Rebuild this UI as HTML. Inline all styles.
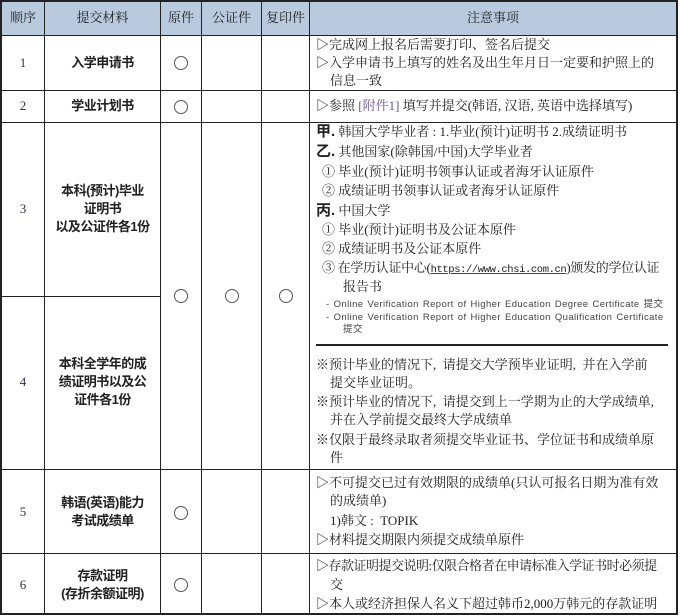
<!DOCTYPE html>
<html><head><meta charset="utf-8"><style>
body{margin:0;width:680px;height:616px;background:#fff;overflow:hidden;position:relative;font-family:"Liberation Serif","Noto Serif CJK SC",serif;color:#222}
.l{position:absolute;background:#222}
.t{position:absolute;white-space:nowrap;font-size:13px;line-height:18px;height:18px}
.c{position:absolute;text-align:center;font-size:13px;line-height:18px}
.b{font-family:"Liberation Sans","Noto Sans CJK SC",sans-serif;font-weight:bold;letter-spacing:-0.5px}
.n{color:#334}
.o{position:absolute;width:12px;height:12px;border:1px solid #555;border-radius:50%}
.s{font-size:9.5px;color:#444;font-family:"Liberation Sans","Noto Sans CJK SC",sans-serif;letter-spacing:0.4px;word-spacing:1px}
.k{font-family:'Liberation Sans','Noto Sans CJK SC',sans-serif;font-size:15px}
</style></head><body>
<div style="position:absolute;left:1px;top:1px;width:676px;height:34px;background:#b9cadf"></div>
<div class="l" style="left:0;top:0;width:2px;height:615px"></div>
<div class="l" style="left:44px;top:0;width:1px;height:615px"></div>
<div class="l" style="left:160px;top:0;width:1px;height:615px"></div>
<div class="l" style="left:201px;top:0;width:1px;height:615px"></div>
<div class="l" style="left:261px;top:0;width:1px;height:615px"></div>
<div class="l" style="left:309px;top:0;width:1px;height:615px"></div>
<div class="l" style="left:676px;top:0;width:2px;height:615px"></div>
<div class="l" style="left:0;top:0;width:678px;height:2px"></div>
<div class="l" style="left:0;top:35px;width:678px;height:1px"></div>
<div class="l" style="left:0;top:90px;width:678px;height:1px"></div>
<div class="l" style="left:0;top:122px;width:678px;height:1px"></div>
<div class="l" style="left:0;top:296px;width:161px;height:1px"></div>
<div class="l" style="left:0;top:469px;width:678px;height:1px"></div>
<div class="l" style="left:0;top:553px;width:678px;height:1px"></div>
<div class="l" style="left:0;top:613px;width:678px;height:2px"></div>
<div class="l" style="left:316px;top:344px;width:352px;height:2px"></div>

<div class="c" style="left:2px;width:42px;top:9px">顺序</div>
<div class="c" style="left:45px;width:115px;top:9px">提交材料</div>
<div class="c" style="left:161px;width:40px;top:9px">原件</div>
<div class="c" style="left:202px;width:59px;top:9px">公证件</div>
<div class="c" style="left:262px;width:47px;top:9px">复印件</div>
<div class="c" style="left:310px;width:366px;top:9px">注意事项</div>

<div class="c n" style="left:2px;width:42px;top:54px">1</div>
<div class="c n" style="left:2px;width:42px;top:97px">2</div>
<div class="c n" style="left:2px;width:42px;top:200px">3</div>
<div class="c n" style="left:2px;width:42px;top:373px">4</div>
<div class="c n" style="left:2px;width:42px;top:503px">5</div>
<div class="c n" style="left:2px;width:42px;top:576px">6</div>

<div class="c b" style="left:45px;width:115px;top:54px">入学申请书</div>
<div class="c b" style="left:45px;width:115px;top:97px">学业计划书</div>
<div class="c b" style="left:45px;width:115px;top:182px">本科(预计)毕业<br>证明书<br>以及公证件各1份</div>
<div class="c b" style="left:45px;width:115px;top:355px">本科全学年的成<br>绩证明书以及公<br>证件各1份</div>
<div class="c b" style="left:45px;width:115px;top:494px">韩语(英语)能力<br>考试成绩单</div>
<div class="c b" style="left:45px;width:115px;top:567px">存款证明<br>(存折余额证明)</div>

<div class="o" style="left:174px;top:56px"></div>
<div class="o" style="left:174px;top:100px"></div>
<div class="o" style="left:174px;top:289px"></div>
<div class="o" style="left:225px;top:289px"></div>
<div class="o" style="left:279px;top:289px"></div>
<div class="o" style="left:174px;top:506px"></div>
<div class="o" style="left:174px;top:578px"></div>

<div class="t" style="left:316px;top:36px">▷完成网上报名后需要打印、签名后提交</div>
<div class="t" style="left:316px;top:54px">▷入学申请书上填写的姓名及出生年月日一定要和护照上的</div>
<div class="t" style="left:330px;top:72px">信息一致</div>
<div class="t" style="left:316px;top:97px">▷参照 <span style="color:#6a4fa0">[附件1]</span> 填写并提交(韩语, 汉语, 英语中选择填写)</div>

<div class="t" style="left:316px;top:123px"><b class="k">甲.</b> 韩国大学毕业者 : 1.毕业(预计)证明书 2.成绩证明书</div>
<div class="t" style="left:316px;top:143px"><b class="k">乙.</b> 其他国家(除韩国/中国)大学毕业者</div>
<div class="t" style="left:322px;top:163px">① 毕业(预计)证明书领事认证或者海牙认证原件</div>
<div class="t" style="left:322px;top:182px">② 成绩证明书领事认证或者海牙认证原件</div>
<div class="t" style="left:316px;top:202px"><b class="k">丙.</b> 中国大学</div>
<div class="t" style="left:322px;top:221px">① 毕业(预计)证明书及公证本原件</div>
<div class="t" style="left:322px;top:240px">② 成绩证明书及公证本原件</div>
<div class="t" style="left:322px;top:259px;letter-spacing:-0.3px">③ 在学历认证中心(<span style="text-decoration:underline;text-decoration-color:#33c;font-family:'Liberation Mono',monospace;font-size:10.5px;letter-spacing:-0.4px">https://www.chsi.com.cn</span>)颁发的学位认证</div>
<div class="t" style="left:343px;top:278px">报告书</div>
<div class="t s" style="left:326px;top:296px">- Online Verification Report of Higher Education Degree Certificate 提交</div>
<div class="t s" style="left:326px;top:309px">- Online Verification Report of Higher Education Qualification Certificate</div>
<div class="t s" style="left:343px;top:321px">提交</div>

<div class="t" style="left:316px;top:356px">※预计毕业的情况下, &nbsp;请提交大学预毕业证明, &nbsp;并在入学前</div>
<div class="t" style="left:330px;top:374px">提交毕业证明。</div>
<div class="t" style="left:316px;top:393px">※预计毕业的情况下, &nbsp;请提交到上一学期为止的大学成绩单,</div>
<div class="t" style="left:330px;top:411px">并在入学前提交最终大学成绩单</div>
<div class="t" style="left:316px;top:431px">※仅限于最终录取者须提交毕业证书、学位证书和成绩单原</div>
<div class="t" style="left:330px;top:449px">件</div>

<div class="t" style="left:316px;top:474px">▷不可提交已过有效期限的成绩单(只认可报名日期为准有效</div>
<div class="t" style="left:330px;top:492px">的成绩单)</div>
<div class="t" style="left:330px;top:512px">1)韩文 : &nbsp;TOPIK</div>
<div class="t" style="left:316px;top:531px">▷材料提交期限内须提交成绩单原件</div>
<div class="t" style="left:316px;top:557px;letter-spacing:-0.5px">▷存款证明提交说明:仅限合格者在申请标准入学证书时必须提</div>
<div class="t" style="left:330px;top:576px">交</div>
<div class="t" style="left:316px;top:595px">▷本人或经济担保人名义下超过韩币2,000万韩元的存款证明</div>
</body></html>
